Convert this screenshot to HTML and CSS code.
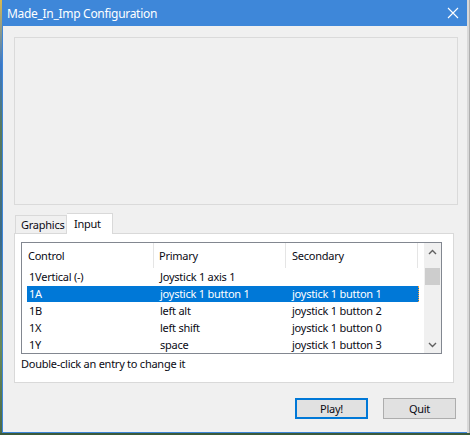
FILE: index.html
```html
<!DOCTYPE html>
<html>
<head>
<meta charset="utf-8">
<link rel="stylesheet" href="styles.css">
</head>
<body>
<div class="screen">
  <div class="desk-left"></div>
  <div class="window">
    <div class="titlebar">
      <span class="title">Made_In_Imp Configuration</span>
      <svg class="close" width="12" height="12" viewBox="0 0 12 12"><path d="M1 1 L11 11 M11 1 L1 11" stroke="#fff" stroke-width="1.1" fill="none"/></svg>
    </div>
    <div class="body">
      <div class="banner"></div>
      <div class="tabs">
        <div class="tab">Graphics</div>
        <div class="tab active">Input</div>
      </div>
      <div class="panel">
        <div class="list">
          <div class="list-main">
            <div class="header">
              <div class="hcell c1">Control</div>
              <div class="hcell c2">Primary</div>
              <div class="hcell c3">Secondary</div>
              <div class="hcell c4"></div>
            </div>
            <div class="row"><span class="cell first">1Vertical (-)</span><span class="cell">Joystick 1 axis 1</span><span class="cell"></span></div>
            <div class="row selected"><span class="cell first">1A</span><span class="cell">joystick 1 button 1</span><span class="cell">joystick 1 button 1</span></div>
            <div class="row"><span class="cell first">1B</span><span class="cell">left alt</span><span class="cell">joystick 1 button 2</span></div>
            <div class="row"><span class="cell first">1X</span><span class="cell">left shift</span><span class="cell">joystick 1 button 0</span></div>
            <div class="row"><span class="cell first">1Y</span><span class="cell">space</span><span class="cell">joystick 1 button 3</span></div>
          </div>
          <div class="scrollbar">
            <div class="arrow"><svg width="9" height="6" viewBox="0 0 9 6"><path d="M1 5 L4.5 1.5 L8 5" stroke="#606060" stroke-width="1.4" fill="none"/></svg></div>
            <div class="track"><div class="thumb"></div></div>
            <div class="arrow"><svg width="9" height="6" viewBox="0 0 9 6"><path d="M1 1 L4.5 4.5 L8 1" stroke="#606060" stroke-width="1.4" fill="none"/></svg></div>
          </div>
        </div>
        <div class="hint">Double-click an entry to change it</div>
      </div>
      <div class="buttons">
        <div class="btn default">Play!</div>
        <div class="btn">Quit</div>
      </div>
    </div>
  </div>
  <div class="desk-right"></div>
</div>
</body>
</html>
```

FILE: styles.css
```css
html, body {
  margin: 0;
  padding: 0;
}
body {
  width: 470px;
  height: 435px;
  overflow: hidden;
  background: linear-gradient(180deg, #3a5a3a 0%, #4a6b4a 40%, #2e4a5a 70%, #3b5a3b 100%);
  font-family: "Noto Sans", "Open Sans", sans-serif;
  font-size: 11px;
  letter-spacing: -0.25px;
  color: #0a0a14;
}
.screen {
  display: flex;
  height: 433px;
}
.desk-left {
  width: 2px;
  background: linear-gradient(180deg, #d8b850 0%, #3a78c8 15%, #5a7a5a 30%, #3a6a8a 55%, #6a8a5a 80%, #4a6a4a 100%);
}
.desk-right {
  width: 3px;
  background: linear-gradient(90deg, #d9d9d9 0%, #d9d9d9 50%, #9a9a9a 100%);
}
.window {
  width: 464px;
  height: 432px;
  border-left: 1px solid #3f86d8;
  border-bottom: 1px solid #3f86d8;
  background: #f0f0f0;
  display: flex;
  flex-direction: column;
}
.titlebar {
  height: 26px;
  background: #3e87d9;
  display: flex;
  align-items: center;
  justify-content: space-between;
  padding: 0 8px 0 4px;
  margin-left: -1px;
}
.title {
  color: #fff;
  font-size: 12px;
  letter-spacing: -0.3px;
  padding-left: 1px;
}
.close {
  display: block;
}
.body {
  display: flex;
  flex-direction: column;
  flex: 1;
}
.banner {
  margin: 11px 9px 0 11px;
  height: 166px;
  border: 1px solid #dadada;
  background: #f0f0f0;
}
.tabs {
  display: flex;
  align-items: flex-end;
  margin: 8px 0 0 12px;
  height: 20px;
  position: relative;
  z-index: 1;
}
.tab {
  height: 17px;
  width: 44px;
  padding: 0 1px 0 5px;
  border: 1px solid #d9d9d9;
  border-bottom: none;
  background: #f0f0f0;
  line-height: 18px;
  white-space: nowrap;
}
.tab.active {
  height: 20px;
  width: 38px;
  background: #fff;
  border-left: none;
  padding: 0 0 0 7px;
  line-height: 20px;
  margin-bottom: -1px;
}
.panel {
  margin-left: 11px;
  width: 438px;
  height: 148px;
  border: 1px solid #d9d9d9;
  background: #fff;
}
.list {
  margin: 8px 0 0 6px;
  width: 419px;
  height: 110px;
  border: 1px solid #828790;
  display: flex;
  background: #fff;
}
.list-main {
  flex: 1;
  overflow: hidden;
}
.header {
  display: flex;
  height: 26px;
}
.hcell {
  box-sizing: border-box;
  border-right: 1px solid #e5e5e5;
  padding-left: 6px;
  line-height: 25px;
  height: 25px;
}
.c1 { width: 132px; }
.c2 { width: 132px; padding-left: 5px; }
.c3 { width: 132px; padding-left: 6px; }
.c4 { flex: 1; border-right: none; }
.row {
  display: grid;
  grid-template-columns: 127px 132px 133px;
  margin-left: 5px;
  width: 392px;
  height: 17px;
  line-height: 16px;
  box-sizing: border-box;
}
.row.selected {
  background: #0078d7;
  color: #fff;
  height: 16px;
  margin-bottom: 1px;
  border-right: 1px dotted #f0a040;
}
.cell {
  padding-left: 6px;
  white-space: nowrap;
}
.cell.first {
  padding-left: 2px;
}
.scrollbar {
  width: 17px;
  background: #f0f0f0;
  display: flex;
  flex-direction: column;
}
.arrow {
  height: 17px;
  display: flex;
  align-items: center;
  justify-content: center;
}
.track {
  flex: 1;
  padding-top: 8px;
}
.thumb {
  margin: 0 1px;
  height: 17px;
  background: #cdcdcd;
}
.hint {
  margin: 2px 0 0 6px;
  line-height: 16px;
}
.buttons {
  display: flex;
  justify-content: flex-end;
  gap: 15px;
  margin-top: 15px;
  padding-right: 11px;
}
.btn {
  box-sizing: border-box;
  width: 73px;
  height: 21px;
  border: 1px solid #adadad;
  background: #e1e1e1;
  text-align: center;
  line-height: 19px;
}
.btn.default {
  border: 2px solid #0078d7;
  line-height: 17px;
}
```
